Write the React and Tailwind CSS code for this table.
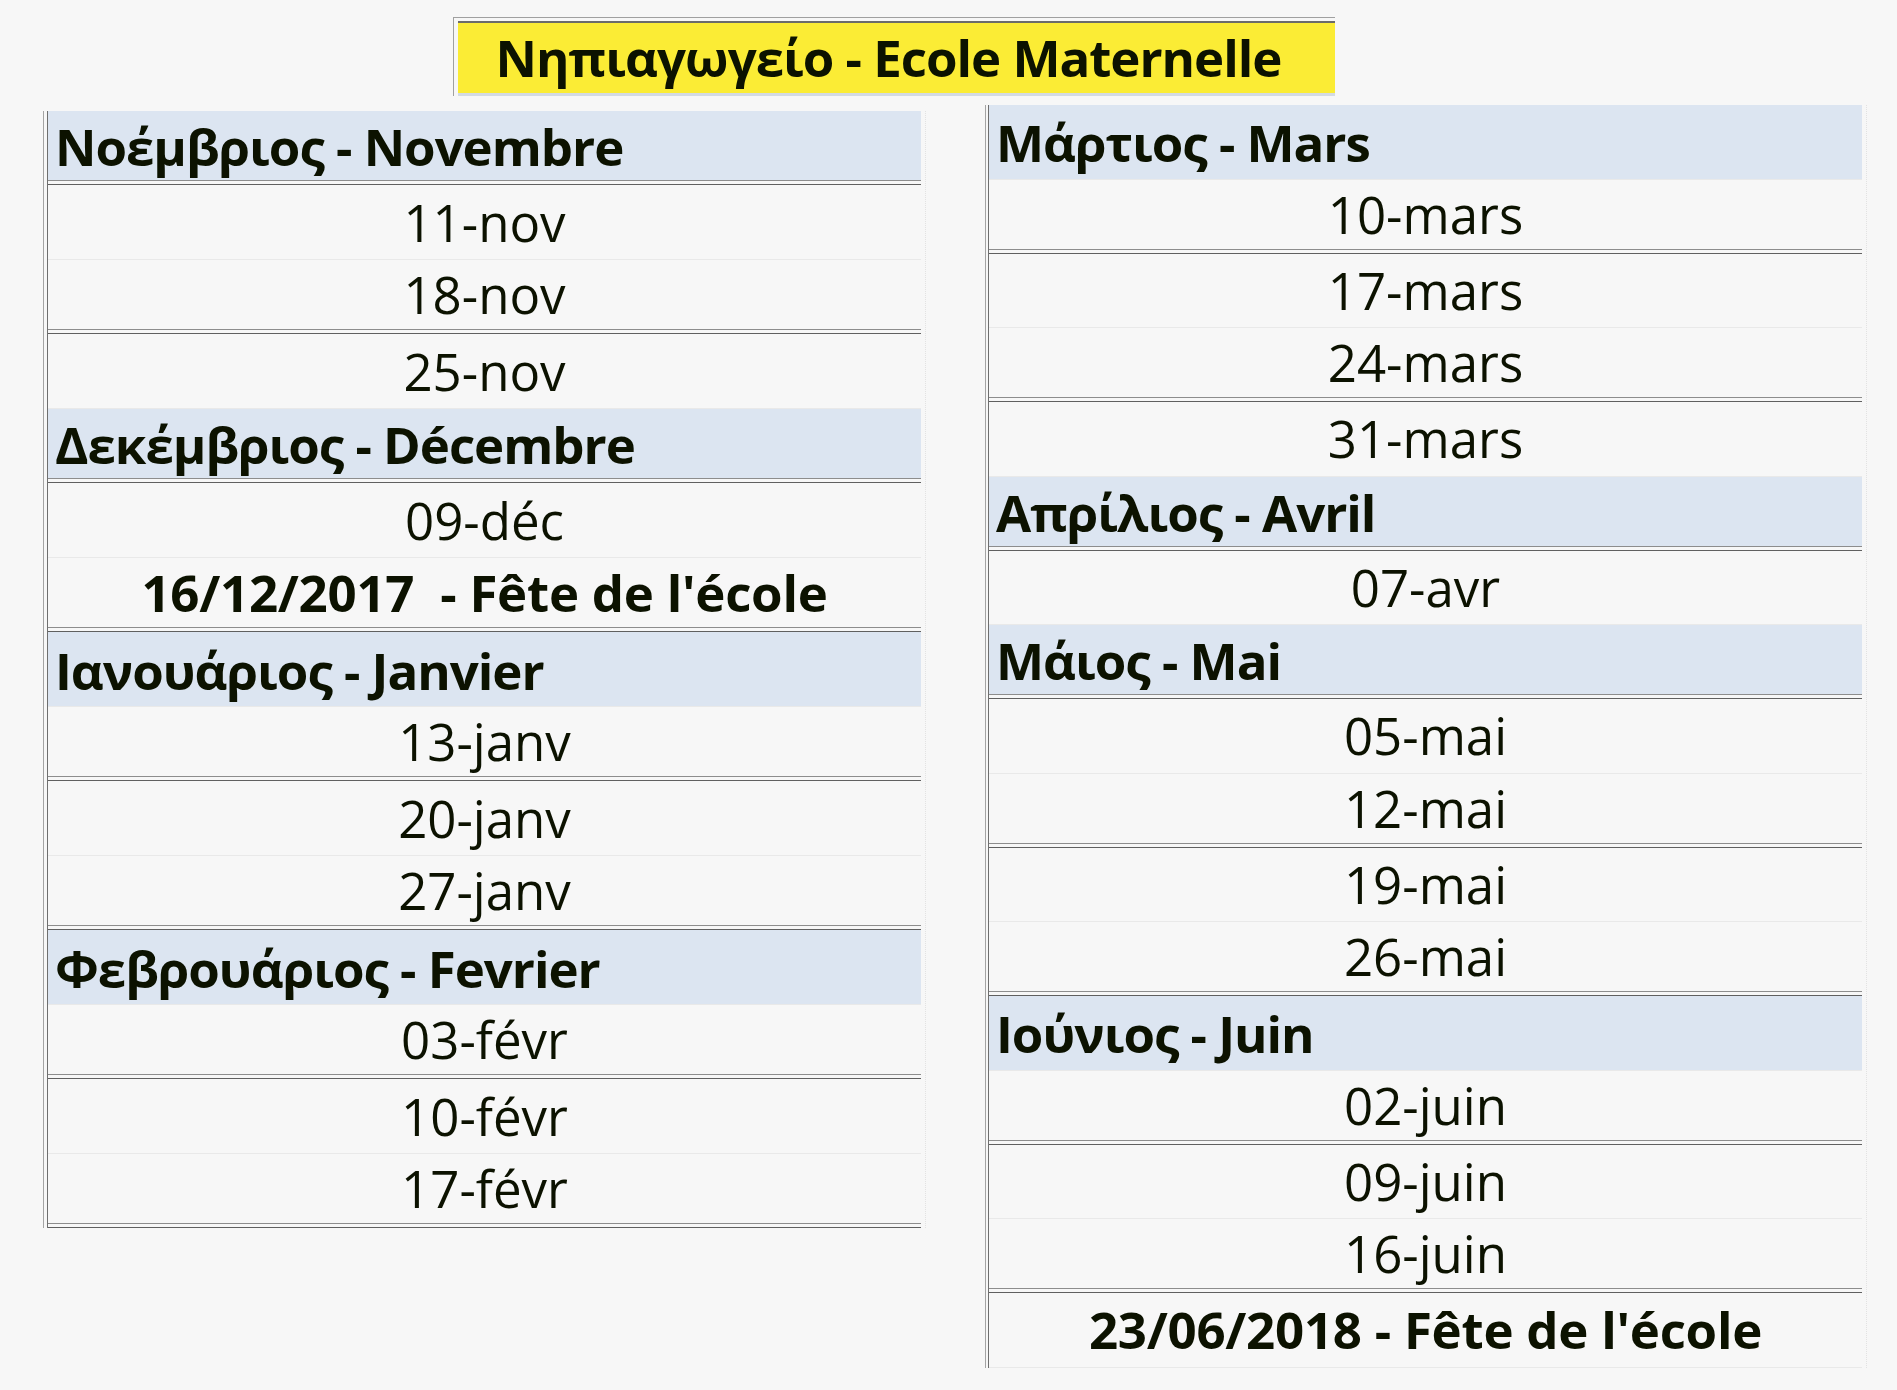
import React from "react";

const leftRows = [
  { text: "Νοέμβριος - Novembre", head: true },
  { text: "11-nov" },
  { text: "18-nov" },
  { text: "25-nov" },
  { text: "Δεκέμβριος - Décembre", head: true },
  { text: "09-déc" },
  { text: "16/12/2017  - Fête de l'école", bold: true },
  { text: "Ιανουάριος - Janvier", head: true },
  { text: "13-janv" },
  { text: "20-janv" },
  { text: "27-janv" },
  { text: "Φεβρουάριος - Fevrier", head: true },
  { text: "03-févr" },
  { text: "10-févr" },
  { text: "17-févr" },
];

const rightRows = [
  { text: "Μάρτιος - Mars", head: true },
  { text: "10-mars" },
  { text: "17-mars" },
  { text: "24-mars" },
  { text: "31-mars" },
  { text: "Απρίλιος - Avril", head: true },
  { text: "07-avr" },
  { text: "Μάιος - Mai", head: true },
  { text: "05-mai" },
  { text: "12-mai" },
  { text: "19-mai" },
  { text: "26-mai" },
  { text: "Ιούνιος - Juin", head: true },
  { text: "02-juin" },
  { text: "09-juin" },
  { text: "16-juin" },
  { text: "23/06/2018 - Fête de l'école", bold: true },
];

function Row({ row, double, lightHeight }) {
  const height = double ? "h-[69px]" : lightHeight;
  let cell = "flex items-center justify-center text-[51px] font-normal";
  if (row.head) {
    cell = "flex items-center bg-[#dce5f1] pl-[7px] pt-[2px] text-[51px] font-bold tracking-[-0.02em]";
  } else if (row.bold) {
    cell = "flex items-center justify-center text-[51px] font-bold tracking-[-0.005em] whitespace-pre";
  }
  return (
    <div>
      <div className={`${height} ${cell}`}>{row.text}</div>
      {double ? (
        <div className="h-[5px] border-t border-b border-t-[#8d8d8d] border-b-[#606060]" />
      ) : (
        <div className="h-px bg-[#e9e9e9]" />
      )}
    </div>
  );
}

function Table({ rows, doubleOnEven, lightHeight, gap }) {
  return (
    <div className="border-r border-dotted border-[#e2e2e2] pr-[4px]">
      <div className={`border-l border-[#a4a4a4] ${gap}`}>
        <div className="w-[874px] border-l border-[#6f6f6f]">
          {rows.map((row, i) => (
            <Row
              key={i}
              row={row}
              double={doubleOnEven ? i % 2 === 0 : i % 2 === 1}
              lightHeight={lightHeight}
            />
          ))}
        </div>
      </div>
    </div>
  );
}

export default function App() {
  return (
    <div className="min-h-screen bg-[#f7f7f7] pt-[17px] font-['Open_Sans',sans-serif] leading-none text-[#0c1200]">
      {/* Title */}
      <div className="ml-[453px] w-[882px] border-l border-t border-[#a0a0a0] pl-[4px] pt-[3px]">
        <div className="flex h-[72px] items-center justify-center border-t-2 border-[#6b6b6b] bg-[#fbec35] pr-[16px] pb-[2px] text-[51px] font-bold tracking-[-0.02em]">
          Νηπιαγωγείο - Ecole Maternelle
        </div>
        <div className="h-[3px] bg-[#d3dae3]" />
      </div>

      <div className="flex items-start">
        <div className="ml-[43px] mt-[15px]">
          <Table rows={leftRows} doubleOnEven lightHeight="h-[74px]" gap="pl-[3px]" />
        </div>
        <div className="ml-[59px] mt-[9px]">
          <Table rows={rightRows} doubleOnEven={false} lightHeight="h-[73.5px]" gap="pl-[2px]" />
        </div>
      </div>
    </div>
  );
}
